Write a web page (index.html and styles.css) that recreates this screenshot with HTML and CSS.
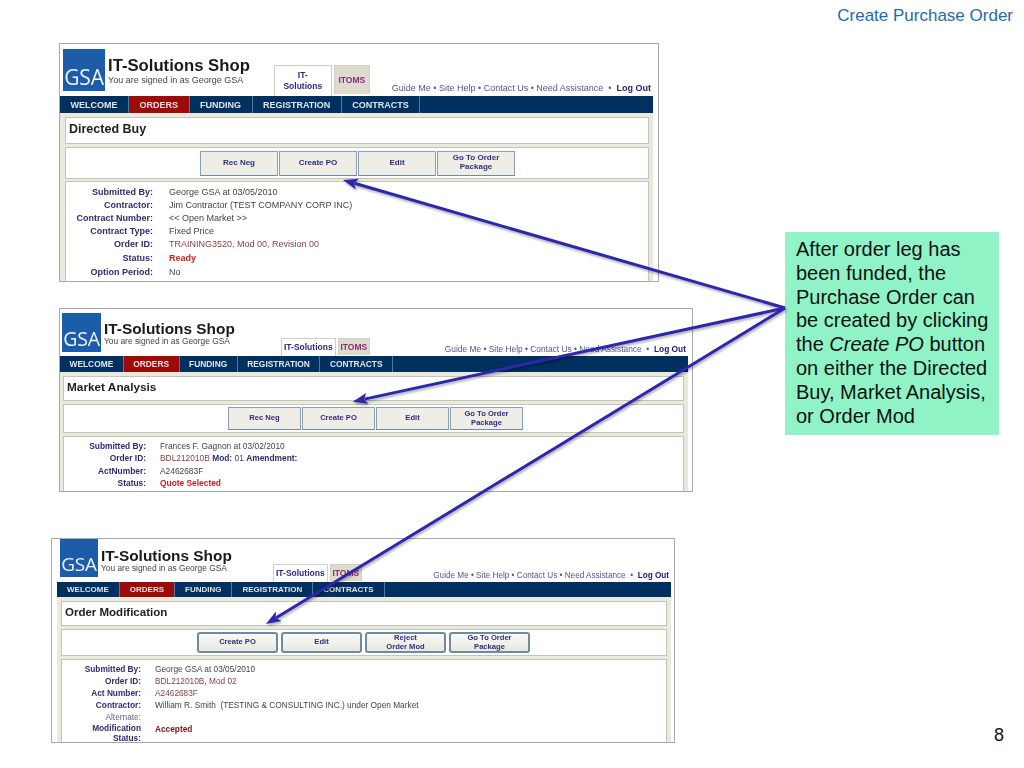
FILE: index.html
```html
<!DOCTYPE html>
<html lang="en">
<head>
<meta charset="utf-8">
<title>Create Purchase Order</title>
<link rel="stylesheet" href="styles.css">
</head>
<body>
<div class="slide">
  <h1 class="slide-title">Create Purchase Order</h1>

  <section class="shot shot-a">
    <div class="app">
      <header class="head">
        <div class="logo">GSA</div>
        <div class="brand"><div class="brand-name">IT-Solutions Shop</div><div class="brand-sub">You are signed in as George GSA</div></div>
        <div class="tabs"><div class="tab tab-on">IT-<br>Solutions</div><div class="tab tab-off">ITOMS</div></div>
        <div class="links">Guide Me • Site Help • Contact Us • Need Assistance &nbsp;•&nbsp; <b>Log Out</b></div>
      </header>
      <nav class="nav"><span class="nav-item">WELCOME</span><span class="nav-item nav-on">ORDERS</span><span class="nav-item">FUNDING</span><span class="nav-item">REGISTRATION</span><span class="nav-item">CONTRACTS</span></nav>
      <div class="body">
        <div class="panel panel-title">Directed Buy</div>
        <div class="panel panel-btns">
          <span class="btn">Rec Neg</span><span class="btn">Create PO</span><span class="btn">Edit</span><span class="btn">Go To Order<br>Package</span>
        </div>
        <div class="panel panel-info">
          <span class="k">Submitted By:</span><span class="v">George GSA at 03/05/2010</span>
          <span class="k">Contractor:</span><span class="v">Jim Contractor (TEST COMPANY CORP INC)</span>
          <span class="k">Contract Number:</span><span class="v">&lt;&lt; Open Market &gt;&gt;</span>
          <span class="k">Contract Type:</span><span class="v">Fixed Price</span>
          <span class="k">Order ID:</span><span class="v v-id">TRAINING3520, Mod 00, Revision 00</span>
          <span class="k k-gap">Status:</span><span class="v v-red k-gap">Ready</span>
          <span class="k k-gap">Option Period:</span><span class="v k-gap">No</span>
        </div>
      </div>
    </div>
  </section>

  <section class="shot shot-b">
    <div class="app">
      <header class="head">
        <div class="logo">GSA</div>
        <div class="brand"><div class="brand-name">IT-Solutions Shop</div><div class="brand-sub">You are signed in as George GSA</div></div>
        <div class="tabs"><div class="tab tab-on">IT-Solutions</div><div class="tab tab-off">ITOMS</div></div>
        <div class="links">Guide Me • Site Help • Contact Us • Need Assistance &nbsp;•&nbsp; <b>Log Out</b></div>
      </header>
      <nav class="nav"><span class="nav-item">WELCOME</span><span class="nav-item nav-on">ORDERS</span><span class="nav-item">FUNDING</span><span class="nav-item">REGISTRATION</span><span class="nav-item">CONTRACTS</span></nav>
      <div class="body">
        <div class="panel panel-title">Market Analysis</div>
        <div class="panel panel-btns">
          <span class="btn">Rec Neg</span><span class="btn">Create PO</span><span class="btn">Edit</span><span class="btn">Go To Order<br>Package</span>
        </div>
        <div class="panel panel-info">
          <span class="k">Submitted By:</span><span class="v">Frances F. Gagnon at 03/02/2010</span>
          <span class="k">Order ID:</span><span class="v"><span class="v-id">BDL212010B</span> <b class="v-key">Mod:</b> 01 <b class="v-key">Amendment:</b></span>
          <span class="k">ActNumber:</span><span class="v">A2462683F</span>
          <span class="k">Status:</span><span class="v v-red">Quote Selected</span>
        </div>
      </div>
    </div>
  </section>

  <section class="shot shot-c">
    <div class="app">
      <header class="head">
        <div class="logo">GSA</div>
        <div class="brand"><div class="brand-name">IT-Solutions Shop</div><div class="brand-sub">You are signed in as George GSA</div></div>
        <div class="tabs"><div class="tab tab-on">IT-Solutions</div><div class="tab tab-off">ITOMS</div></div>
        <div class="links">Guide Me • Site Help • Contact Us • Need Assistance &nbsp;•&nbsp; <b>Log Out</b></div>
      </header>
      <nav class="nav"><span class="nav-item">WELCOME</span><span class="nav-item nav-on">ORDERS</span><span class="nav-item">FUNDING</span><span class="nav-item">REGISTRATION</span><span class="nav-item">CONTRACTS</span></nav>
      <div class="body">
        <div class="panel panel-title">Order Modification</div>
        <div class="panel panel-btns">
          <span class="btn">Create PO</span><span class="btn">Edit</span><span class="btn">Reject<br>Order Mod</span><span class="btn">Go To Order<br>Package</span>
        </div>
        <div class="panel panel-info">
          <span class="k">Submitted By:</span><span class="v">George GSA at 03/05/2010</span>
          <span class="k">Order ID:</span><span class="v v-id">BDL212010B, Mod 02</span>
          <span class="k">Act Number:</span><span class="v v-id">A2462683F</span>
          <span class="k">Contractor:</span><span class="v">William R. Smith &nbsp;(TESTING &amp; CONSULTING INC.) under Open Market</span>
          <span class="k k-plain">Alternate:</span><span class="v"></span>
          <span class="k k-wrap">Modification<br>Status:</span><span class="v v-dark">Accepted</span>
        </div>
      </div>
    </div>
  </section>

  <aside class="callout">After order leg has been funded, the Purchase Order can be created by clicking the <i>Create PO</i> button on either the Directed Buy, Market Analysis, or Order Mod</aside>
  <div class="page-num">8</div>

  <svg class="arrows" width="1024" height="768" viewBox="0 0 1024 768" aria-hidden="true">
    <defs>
      <marker id="head" markerUnits="userSpaceOnUse" markerWidth="16" markerHeight="12" refX="3" refY="6" orient="auto">
        <path class="arrow-head" d="M0 .5 L15 6 L0 11.5 L3.5 6 Z"/>
      </marker>
    </defs>
    <line class="arrow" x1="785" y1="308" x2="354.5" y2="183.3" marker-end="url(#head)"/>
    <line class="arrow" x1="785" y1="308" x2="364.4" y2="399.1" marker-end="url(#head)"/>
    <line class="arrow" x1="785" y1="308" x2="276.2" y2="617.8" marker-end="url(#head)"/>
  </svg>
</div>
</body>
</html>
```

FILE: styles.css
```css
* { box-sizing: border-box; }
html, body { margin: 0; background: #fff; }
body { font-family: "Liberation Sans", Arial, sans-serif; color: #000; }

.slide { position: relative; width: 1024px; height: 768px; overflow: hidden; background: #fff; }
.slide-title { margin: 0; padding: 6px 11px 0 0; text-align: right; font-size: 17px; line-height: 20px; font-weight: 400; color: #1f6ab0; }

/* screenshots placed on the slide canvas */
.shot { position: absolute; background: #fff; border: 1px solid #a8a8a8; overflow: hidden; filter: blur(.45px); }
.shot-a { left: 59px; top: 43px; width: 600px; height: 239px;
  --head-h: 52px; --nav-h: 17px; --logo: 42px; --logo-top: 5px; --app-l: 0; --app-w: 593px; --pad-l: 3px;
  --name: 16.7px; --sub: 9px; --small: 9px; --nav-font: 9px; --nav-pad: 10.5px; --brand-top: 14px; --tabs-l: 24px;
  --btn-w: 78px; --btn-font: 8px; --btn-h: 25px; --btns-l: 134px; --t-h: 27px; --b-h: 32px; --gap: 3px; --title-font: 12.5px; --title-pb: 4px;
  --col: 87px; --col-gap: 16px; --row: 13px; --info-top: 4px; --m-l: 5px; --m-r: 4px; --links: 9px; --links-pb: 2px; }
.shot-b { left: 59px; top: 308px; width: 634px; height: 184px;
  --head-h: 47px; --nav-h: 16px; --logo: 39px; --logo-top: 4px; --app-l: 0; --app-w: 628px; --pad-l: 2px;
  --name: 15.4px; --sub: 8.4px; --small: 8.4px; --nav-font: 8.4px; --nav-pad: 9.5px; --brand-top: 12px; --tabs-l: 46px;
  --btn-w: 73px; --btn-font: 7.6px; --btn-h: 23px; --btns-l: 164px; --t-h: 25px; --b-h: 29px; --gap: 3px; --title-font: 11.8px; --title-pb: 3px;
  --col: 82px; --col-gap: 14px; --row: 12.4px; --info-top: 3px; --m-l: 3px; --m-r: 4px; --links: 8.4px; --links-pb: 1px; }
.shot-c { left: 51px; top: 538px; width: 624px; height: 205px;
  --head-h: 43px; --nav-h: 15px; --logo: 38px; --logo-top: 0px; --app-l: 5px; --app-w: 614px; --pad-l: 3px;
  --name: 15.4px; --sub: 8.4px; --small: 8.3px; --nav-font: 8px; --nav-pad: 10px; --brand-top: 8.5px; --tabs-l: 41px;
  --btn-w: 81px; --btn-font: 7.6px; --btn-h: 21px; --btns-l: 135px; --t-h: 25px; --b-h: 27px; --gap: 3px; --title-font: 11.5px; --title-pb: 4px;
  --col: 79px; --col-gap: 14px; --row: 12px; --info-top: 3px; --m-l: 4px; --m-r: 4px; --links: 8.2px; --links-pb: 1px; }

.app { width: var(--app-w); margin-left: var(--app-l); }

.head { display: flex; height: var(--head-h); padding-left: var(--pad-l); }
.logo { flex: none; width: var(--logo); height: var(--logo); margin-top: var(--logo-top); background: #1d5ca8; color: #eef4fb;
  font-family: "Open Sans", sans-serif; font-size: calc(var(--logo) * .5); font-weight: 400; line-height: 1; letter-spacing: -.2px;
  display: flex; align-items: flex-end; justify-content: center; padding-bottom: calc(var(--logo) * .08); }
.brand { flex: none; margin: var(--brand-top) 0 0 3px; }
.brand-name { font-size: var(--name); line-height: 1; font-weight: 700; color: #1a1a1a; white-space: nowrap; }
.brand-sub { font-size: var(--sub); line-height: 1.3; color: #444; white-space: nowrap; }
.tabs { display: flex; align-items: flex-end; gap: 2px; margin-left: var(--tabs-l); }
.tab { display: flex; align-items: center; justify-content: center; text-align: center; font-size: 8.5px; line-height: 11px; font-weight: 700; border: 1px solid #cfcfc4; border-bottom: 0; }
.tab-on { background: #fff; color: #2a2a80; width: 55px; height: 18px; }
.tab-off { background: #e0dccd; color: #8d2b80; width: 32px; height: 17px; margin-bottom: 1px; }
.shot-a .tab-on { width: 58px; height: 31px; }
.shot-a .tab-off { width: 36px; height: 29px; margin-bottom: 2px; }
.links { margin-left: auto; align-self: flex-end; padding: 0 2px var(--links-pb) 0; font-size: var(--links); line-height: 11px; color: #55558c; white-space: nowrap; }
.links b { color: #22227a; }

.nav { display: flex; height: var(--nav-h); background: #00305f; }
.nav-item { display: flex; align-items: center; padding: 0 var(--nav-pad); font-size: var(--nav-font); font-weight: 700; color: #dfe6ee; border-right: 1px solid #4f7a9f; white-space: nowrap; }
.nav-on { background: #9c0a0a; color: #f3dcdc; }

.body { display: flex; flex-direction: column; gap: var(--gap); padding: 4px var(--m-r) 0 var(--m-l); background: #e9e9dd; height: 400px; }
.panel { background: #fff; border: 1px solid #c4c4b8; }
.panel-title { flex: none; height: var(--t-h); padding: 0 0 var(--title-pb) 3px; display: flex; align-items: center; font-size: var(--title-font); font-weight: 700; color: #222; }
.panel-btns { flex: none; height: var(--b-h); display: flex; align-items: center; gap: 1px; padding-left: var(--btns-l); }
.btn { flex: none; width: var(--btn-w); height: var(--btn-h); display: flex; align-items: center; justify-content: center; text-align: center;
  font-size: var(--btn-font); line-height: 1.1; font-weight: 700; color: #2f2f7c; background: #eeeee6; border: 1px solid #8a9fb2; border-bottom-color: #6f8aa3; }
.shot-c .panel-btns { gap: 3px; }
.shot-c .btn { border: 2px solid #6f8aa3; border-radius: 3px; background: linear-gradient(#fafaf6, #e8e8e0); }

.panel-info { flex: none; display: grid; grid-template-columns: var(--col) 1fr; column-gap: var(--col-gap); grid-auto-rows: minmax(var(--row), auto); align-items: center;
  padding-top: var(--info-top); height: 200px; align-content: start; font-size: var(--small); line-height: var(--row); }
.shot-a .panel-info { margin-top: -1px; }
.k { text-align: right; font-weight: 700; color: #2c2c72; white-space: nowrap; }
.k-plain { font-weight: 400; color: #66668c; }
.k-wrap { line-height: 9.5px; padding-top: 1px; }
.k-gap { padding-top: 1px; }
.v { color: #444; white-space: nowrap; }
.v-id { color: #8c3f3f; }
.v-key { color: #2c2c72; }
.v-red { color: #cc1f1f; font-weight: 700; }
.v-dark { color: #7a1414; font-weight: 700; align-self: start; }

/* slide annotations */
.callout { position: absolute; left: 785px; top: 232px; width: 214px; height: 203px; padding: 6px 8px 0 11px; background: #8ff3c6; font-size: 20px; line-height: 23.8px; color: #111; }
.page-num { position: absolute; right: 20px; top: 725px; font-size: 18px; line-height: 20px; color: #111; }

.arrows { position: absolute; left: 0; top: 0; pointer-events: none; filter: drop-shadow(1px 2px 1px rgba(0,0,0,.3)); }
.arrow { stroke: #2d27b0; stroke-width: 3; }
.arrow-head { fill: #2d27b0; }
```
